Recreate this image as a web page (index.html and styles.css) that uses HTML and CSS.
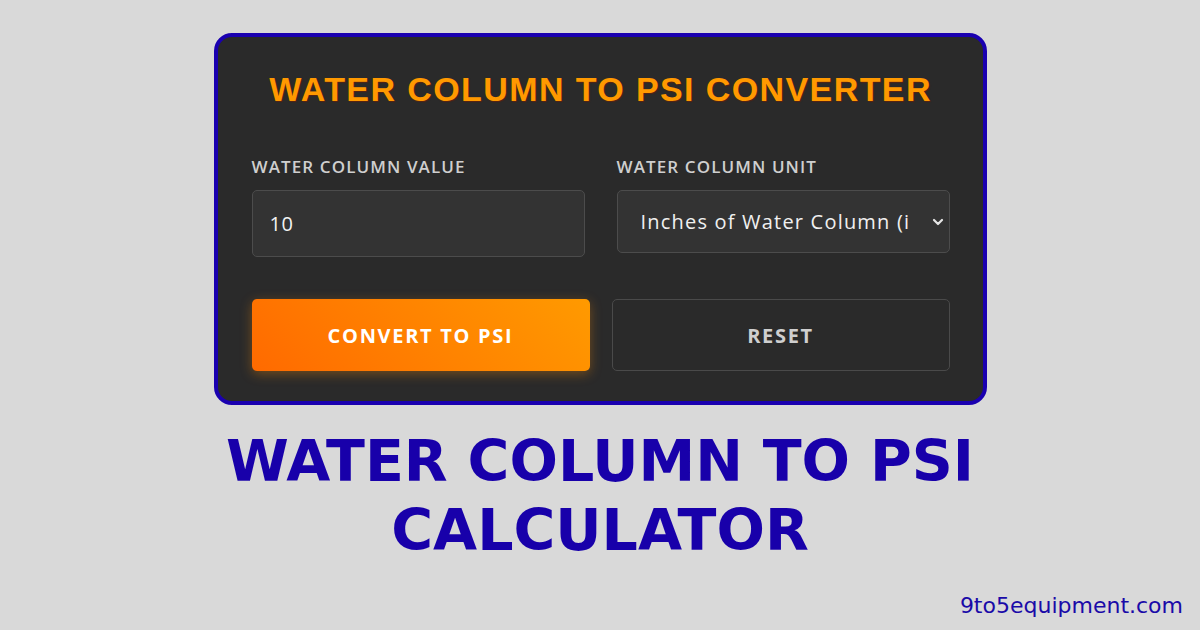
FILE: index.html
```html
<!DOCTYPE html>
<html lang="en">
<head>
<meta charset="utf-8">
<title>Water Column to PSI Calculator</title>
<link rel="stylesheet" href="styles.css">
</head>
<body>
<div class="page">
  <div class="card">
    <h1 class="card-title">WATER COLUMN TO PSI CONVERTER</h1>
    <div class="fields">
      <div class="field">
        <label class="label">WATER COLUMN VALUE</label>
        <div class="input">10</div>
      </div>
      <div class="field">
        <label class="label">WATER COLUMN UNIT</label>
        <div class="select">
          <span class="select-text">Inches of Water Column (i</span>
          <svg class="chev" width="12" height="8" viewBox="0 0 12 8"><path d="M2 2 L6 6 L10 2" fill="none" stroke="#e6e6e6" stroke-width="2.2" stroke-linecap="round" stroke-linejoin="round"/></svg>
        </div>
      </div>
    </div>
    <div class="buttons">
      <div class="btn btn-primary">CONVERT TO PSI</div>
      <div class="btn btn-secondary">RESET</div>
    </div>
  </div>
  <h2 class="headline">WATER COLUMN TO PSI<br>CALCULATOR</h2>
  <div class="site">9to5equipment.com</div>
</div>
</body>
</html>
```
FILE: styles.css
```css
* { box-sizing: border-box; }
html, body { margin: 0; padding: 0; }
body {
  background: #d9d9d9;
  width: 1200px;
  height: 630px;
  overflow: hidden;
}
.page {
  display: flex;
  flex-direction: column;
  align-items: center;
  padding-top: 33px;
  height: 630px;
}
.card {
  width: 773px;
  height: 372px;
  background: #2a2a2a;
  border: 4px solid #1a00b0;
  border-radius: 18px;
  padding: 30px 33px 0 34px;
}
.card-title {
  margin: 0;
  text-align: center;
  font-family: "Liberation Sans", Arial, sans-serif;
  font-weight: 700;
  font-size: 34px;
  line-height: 44px;
  letter-spacing: 1.4px;
  color: #ff9900;
  text-shadow: 1px 1px 1px rgba(120, 30, 0, 0.6);
}
.fields {
  display: grid;
  grid-template-columns: 1fr 1fr;
  column-gap: 32px;
  margin-top: 45px;
}
.field { display: flex; flex-direction: column; }
.label {
  font-family: "Open Sans", sans-serif;
  font-weight: 600;
  font-size: 17px;
  line-height: 22px;
  color: #cfcfcf;
  letter-spacing: 1.1px;
  margin-bottom: 12px;
}
.input {
  height: 67px;
  background: #333333;
  border: 1px solid #4c4c4c;
  border-radius: 5px;
  padding: 0 17px;
  display: flex;
  align-items: center;
  font-family: "Open Sans", sans-serif;
  font-size: 20px;
  letter-spacing: 0.5px;
  color: #f2f2f2;
}
.select {
  height: 63px;
  background: #333333;
  border: 1px solid #4c4c4c;
  border-radius: 5px;
  padding: 0 5px 0 23px;
  display: flex;
  align-items: center;
  justify-content: space-between;
  font-family: "Open Sans", sans-serif;
  font-size: 20px;
  letter-spacing: 1.2px;
  color: #f0f0f0;
}
.chev { margin-top: 1px; }
.buttons {
  display: grid;
  grid-template-columns: 1fr 1fr;
  column-gap: 22px;
  margin-top: 42px;
}
.btn {
  height: 72px;
  border-radius: 5px;
  display: flex;
  align-items: center;
  justify-content: center;
  font-family: "Open Sans", sans-serif;
  font-weight: 700;
  font-size: 20px;
  letter-spacing: 1.7px;
}
.btn-primary {
  background: linear-gradient(45deg, #ff6a00, #ff9a00);
  color: #ffffff;
  box-shadow: 0 3px 12px rgba(255, 140, 0, 0.35);
}
.btn-secondary {
  background: #2a2a2a;
  border: 1px solid #4a4a4a;
  color: #cfcfcf;
}
.headline {
  margin: 22px 0 0;
  text-align: center;
  font-family: "DejaVu Sans", sans-serif;
  font-weight: 700;
  font-size: 57px;
  line-height: 69px;
  color: #1800aa;
}
.site {
  align-self: flex-end;
  margin: auto 17px 12px 0;
  font-family: "DejaVu Sans", sans-serif;
  font-size: 22px;
  color: #1a0aa8;
}
```
